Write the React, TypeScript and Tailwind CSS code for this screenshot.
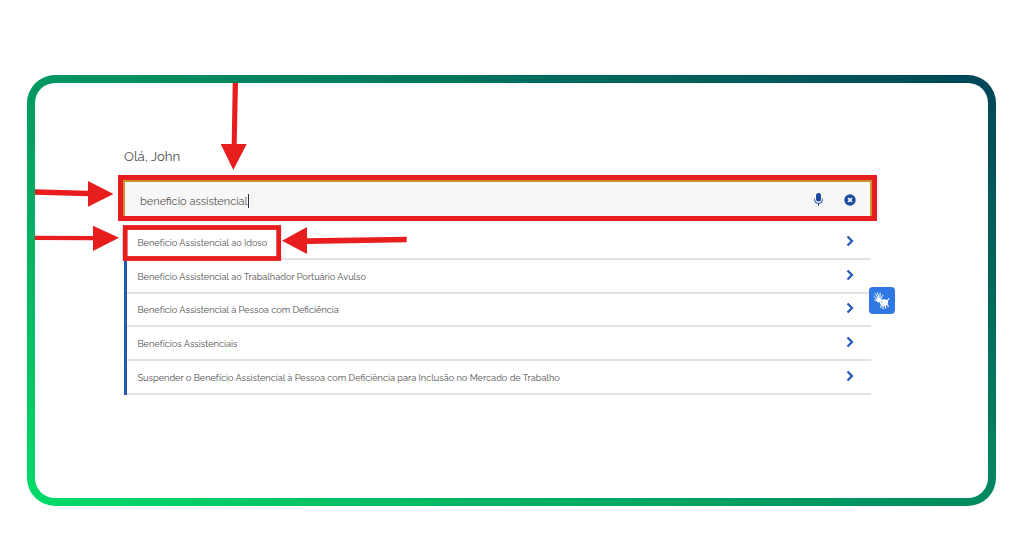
import React from "react";

const items = [
  "Benefício Assistencial ao Idoso",
  "Benefício Assistencial ao Trabalhador Portuário Avulso",
  "Benefício Assistencial à Pessoa com Deficiência",
  "Benefícios Assistenciais",
  "Suspender o Benefício Assistencial à Pessoa com Deficiência para Inclusão no Mercado de Trabalho",
];

function Chevron() {
  return (
    <svg width="10" height="12" viewBox="0 0 10 12" fill="none" className="mb-[2px] shrink-0">
      <path d="M2.5 1.5 L7 6 L2.5 10.5" stroke="#2458b3" strokeWidth="2.2" />
    </svg>
  );
}

function Mic() {
  return (
    <svg width="9" height="13" viewBox="0 0 9 13" fill="#1b4a9c">
      <rect x="2" y="0" width="5" height="8.5" rx="2.5" />
      <path d="M0.5 5.5 V6.5 A4 4 0 0 0 8.5 6.5 V5.5" fill="none" stroke="#1b4a9c" strokeWidth="1" />
      <rect x="4" y="10" width="1" height="3" />
    </svg>
  );
}

function Clear() {
  return (
    <svg width="12" height="12" viewBox="0 0 12 12">
      <circle cx="6" cy="6" r="5.7" fill="#1b4a9c" />
      <path d="M4 4 L8 8 M8 4 L4 8" stroke="#fff" strokeWidth="1.7" />
    </svg>
  );
}

function Hands() {
  return (
    <svg width="18" height="18" viewBox="0 0 18 18" fill="#fff" stroke="#fff" strokeLinecap="round">
      <g strokeWidth="1">
        <path d="M5.5 7 L2.2 1.5 M6 6.5 L4.6 0.8 M6.8 6.5 L7.2 1 M5 8 L1 4.6 M7.5 7 L10 3.2" />
        <path d="M5 8 L1.8 8.2" />
      </g>
      <ellipse cx="6" cy="8.3" rx="2.6" ry="2.2" stroke="none" />
      <ellipse cx="11" cy="10.6" rx="4" ry="3.3" stroke="none" />
      <g strokeWidth="1.1">
        <path d="M8.6 12 L7.8 15.4 M10.2 13 L10 16.6 M12 13 L12.8 16.2 M13.8 12 L15.4 14.4" />
        <path d="M14 9 L16 6.6" />
      </g>
      <path d="M8.4 9.4 L9 10.2" stroke="#2f78e4" strokeWidth="0.7" />
    </svg>
  );
}

function Annotations() {
  return (
    <svg className="absolute left-0 top-0 pointer-events-none" width="1024" height="536" viewBox="0 0 1024 536">
      <g fill="#e81e1e">
        <path d="M232.7 83 L238 83 L236.7 144 L246.7 144 L233.3 170 L220.7 144 L231.7 144 Z" />
        <path d="M35 189.3 L88 190.7 L88 181 L113.5 194 L88 206.7 L88 196.3 L35 194.8 Z" />
        <path d="M35 235.7 L93 235.9 L93 225.7 L119 237.7 L93 251 L93 240.3 L35 240 Z" />
        <path d="M406.7 236.7 L307 238.3 L307 227 L282 240.7 L307 254 L307 244 L406.7 242.3 Z" />
      </g>
      <rect x="120.5" y="177.5" width="754" height="41" fill="none" stroke="#e81e1e" strokeWidth="5" />
      <rect x="125.2" y="227.5" width="153.5" height="31" fill="none" stroke="#e81e1e" strokeWidth="4.8" />
    </svg>
  );
}

export default function App() {
  return (
    <div className="relative h-[536px] w-[1024px] overflow-hidden bg-white pl-[27px] pr-[28px] pt-[75px] font-['Raleway','Lato',sans-serif]">
      <div className="h-[431px] rounded-[28px] bg-[linear-gradient(28deg,#00dc68,#004558)] p-2">
        <div className="h-full rounded-[20px] bg-white pl-[88px] pr-[116px] pt-[66px]">
          <p className="ml-px text-[13.2px] leading-[16px] text-[#4d4d4d]">Olá, John</p>
          <div className="mt-[15px] flex h-[37px] items-center border-x-2 border-t-2 border-[#c9922a] bg-[#f7f7f7] pl-[15px] pr-[14px] text-[11px] text-[#555]">
            <span className="mt-[2px] flex-1">
              beneficio assistencial<span className="inline-block h-[14px] w-px translate-y-[3px] bg-[#333]" />
            </span>
            <div className="flex items-center gap-[21px]">
              <Mic />
              <Clear />
            </div>
          </div>
          <ul className="mx-px mt-[9px] border-l-[3px] border-[#2458b3]">
            {items.map((t) => (
              <li key={t} className="flex h-[33.75px] items-center justify-between border-b-2 border-[#e2e2e2] pl-[10.5px] pr-[16px] text-[9.2px] text-[#505050]">
                <span className="mt-[2px]">{t}</span>
                <Chevron />
              </li>
            ))}
          </ul>
        </div>
      </div>
      <div className="absolute left-[869px] top-[287px] flex h-[27px] w-[26px] items-center justify-center rounded-[4px] bg-[#2f78e4]">
        <Hands />
      </div>
      <Annotations />
    </div>
  );
}
